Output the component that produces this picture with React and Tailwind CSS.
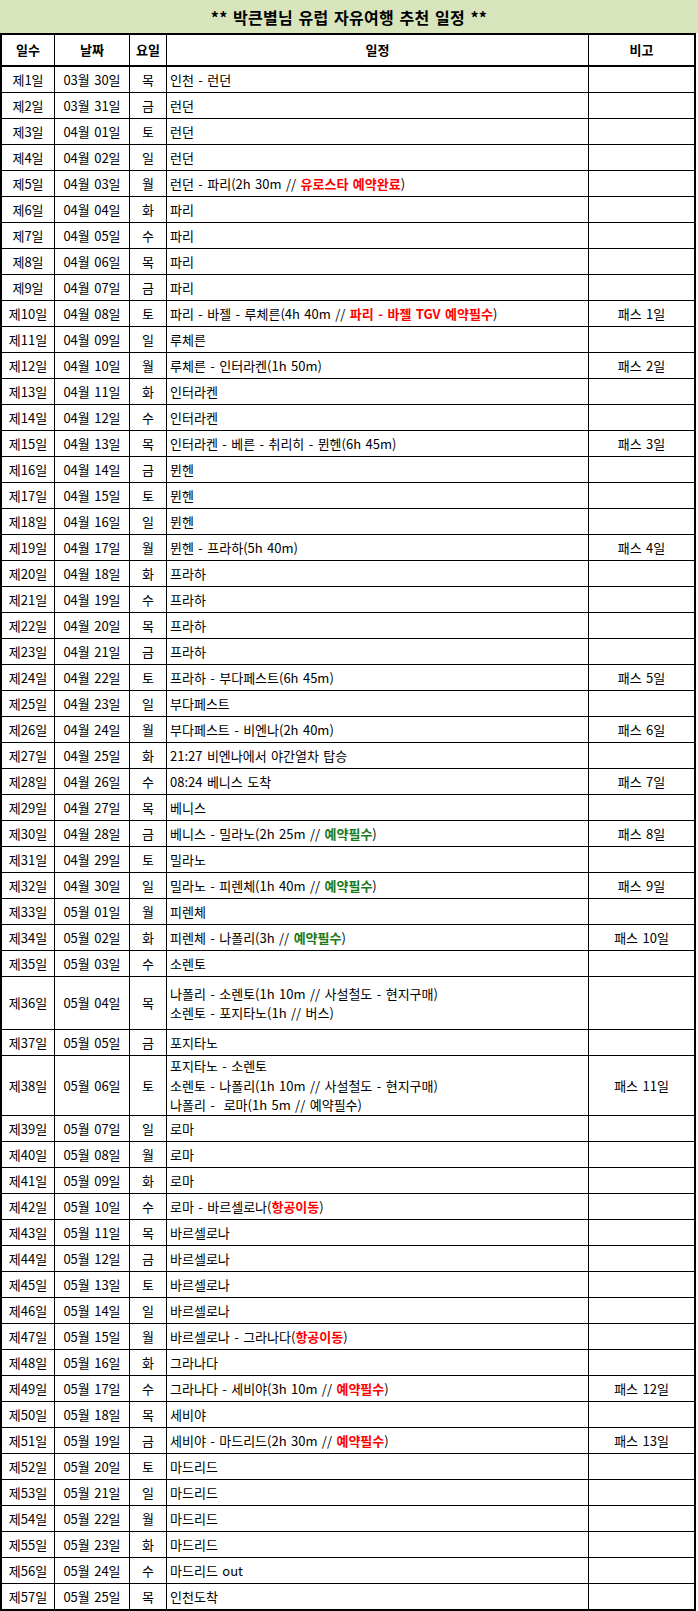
import React from 'react';

const RED = 'text-[#ff0000] font-bold';
const GREEN = 'text-[#1a7a1a] font-bold';

// 일정 내용 (index = 일차 - 1)
const plans = [
  ['인천 - 런던'],
  ['런던'],
  ['런던'],
  ['런던'],
  [['런던 - 파리(2h 30m // ', ['유로스타 예약완료', RED], ')']],
  ['파리'],
  ['파리'],
  ['파리'],
  ['파리'],
  [['파리 - 바젤 - 루체른(4h 40m // ', ['파리 - 바젤 TGV 예약필수', RED], ')'], '패스 1일'],
  ['루체른'],
  ['루체른 - 인터라켄(1h 50m)', '패스 2일'],
  ['인터라켄'],
  ['인터라켄'],
  ['인터라켄 - 베른 - 취리히 - 뮌헨(6h 45m)', '패스 3일'],
  ['뮌헨'],
  ['뮌헨'],
  ['뮌헨'],
  ['뮌헨 - 프라하(5h 40m)', '패스 4일'],
  ['프라하'],
  ['프라하'],
  ['프라하'],
  ['프라하'],
  ['프라하 - 부다페스트(6h 45m)', '패스 5일'],
  ['부다페스트'],
  ['부다페스트 - 비엔나(2h 40m)', '패스 6일'],
  ['21:27 비엔나에서 야간열차 탑승'],
  ['08:24 베니스 도착', '패스 7일'],
  ['베니스'],
  [['베니스 - 밀라노(2h 25m // ', ['예약필수', GREEN], ')'], '패스 8일'],
  ['밀라노'],
  [['밀라노 - 피렌체(1h 40m // ', ['예약필수', GREEN], ')'], '패스 9일'],
  ['피렌체'],
  [['피렌체 - 나폴리(3h // ', ['예약필수', GREEN], ')'], '패스 10일'],
  ['소렌토'],
  [['나폴리 - 소렌토(1h 10m // 사설철도 - 현지구매)', '\n', '소렌토 - 포지타노(1h // 버스)'], '', 53],
  ['포지타노'],
  [['포지타노 - 소렌토', '\n', '소렌토 - 나폴리(1h 10m // 사설철도 - 현지구매)', '\n', '나폴리 -  로마(1h 5m // 예약필수)'], '패스 11일', 60],
  ['로마'],
  ['로마'],
  ['로마'],
  [['로마 - 바르셀로나(', ['항공이동', RED], ')']],
  ['바르셀로나'],
  ['바르셀로나'],
  ['바르셀로나'],
  ['바르셀로나'],
  [['바르셀로나 - 그라나다(', ['항공이동', RED], ')']],
  ['그라나다'],
  [['그라나다 - 세비야(3h 10m // ', ['예약필수', RED], ')'], '패스 12일'],
  ['세비야'],
  [['세비야 - 마드리드(2h 30m // ', ['예약필수', RED], ')'], '패스 13일'],
  ['마드리드'],
  ['마드리드'],
  ['마드리드'],
  ['마드리드'],
  ['마드리드 out'],
  ['인천도착'],
];

const days = ['목', '금', '토', '일', '월', '화', '수'];

const pad = (n) => String(n).padStart(2, '0');

const dateOf = (i) => {
  let m = 3;
  let d = 30 + i;
  if (d > 31) { m = 4; d -= 31; }
  if (m === 4 && d > 30) { m = 5; d -= 30; }
  return `${pad(m)}월 ${pad(d)}일`;
};

const Plan = ({ value }) => {
  if (typeof value === 'string') return <span className="whitespace-pre">{value}</span>;
  const lines = [[]];
  value.forEach((part) => {
    if (part === '\n') lines.push([]);
    else lines[lines.length - 1].push(part);
  });
  return (
    <div className="flex flex-col leading-[19.5px]">
      {lines.map((line, li) => (
        <span key={li} className="whitespace-pre">
          {line.map((p, pi) =>
            Array.isArray(p) ? <span key={pi} className={p[1]}>{p[0]}</span> : <span key={pi}>{p}</span>
          )}
        </span>
      ))}
    </div>
  );
};

const cell = 'flex items-center border-r border-black';

export default function App() {
  return (
    <div
      className="w-[698px] bg-white text-black text-[13px] [word-spacing:1.5px]"
      style={{ fontFamily: '"Noto Sans CJK KR", "Noto Sans", sans-serif' }}
    >
      <div className="h-[33px] bg-[#d8e4bc] flex items-center justify-center font-bold text-[16px] tracking-[0.3px]">
        ** 박큰별님 유럽 자유여행 추천 일정 **
      </div>
      <div className="w-[696px] border-l-2 border-r-2 border-b-2 border-black">
        <div className="grid grid-cols-[53px_75px_37px_422px_105px] h-[34px] border-t-2 border-b-2 border-black font-bold">
          <div className={`${cell} justify-center`}>일수</div>
          <div className={`${cell} justify-center`}>날짜</div>
          <div className={`${cell} justify-center`}>요일</div>
          <div className={`${cell} justify-center`}>일정</div>
          <div className="flex items-center justify-center">비고</div>
        </div>
        {plans.map(([plan, note, h], i) => (
          <div
            key={i}
            className={`grid grid-cols-[53px_75px_37px_422px_105px] ${i < plans.length - 1 ? 'border-b border-black' : ''}`}
            style={{ height: (h || 26) - (i < plans.length - 1 ? 0 : 1) }}
          >
            <div className={`${cell} justify-center`}>제{i + 1}일</div>
            <div className={`${cell} justify-center`}>{dateOf(i)}</div>
            <div className={`${cell} justify-center`}>{days[i % 7]}</div>
            <div className={`${cell} pl-[3px]`}>
              <Plan value={plan} />
            </div>
            <div className="flex items-center justify-center">{note}</div>
          </div>
        ))}
      </div>
    </div>
  );
}
